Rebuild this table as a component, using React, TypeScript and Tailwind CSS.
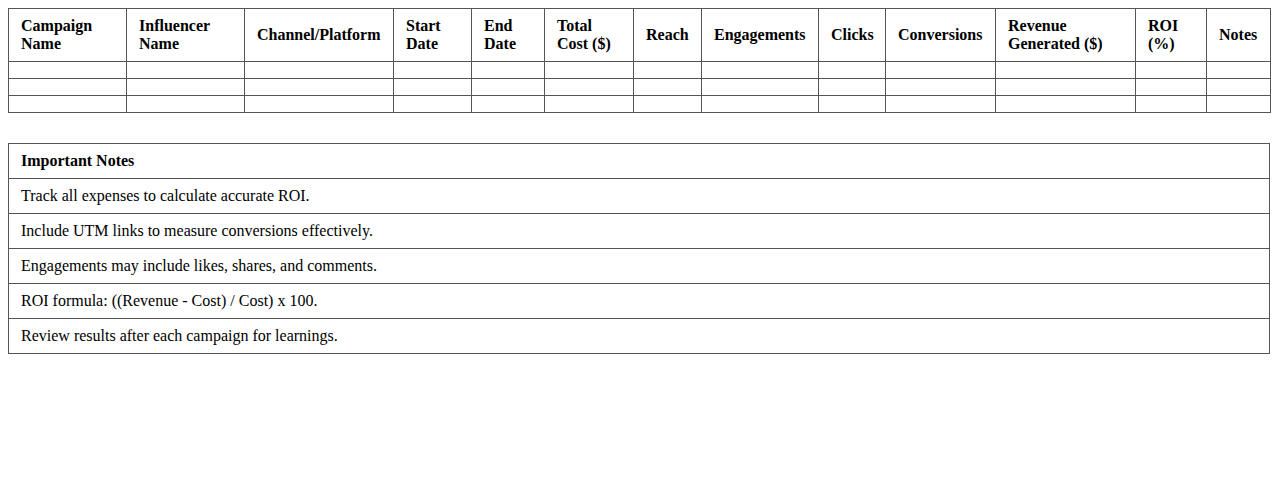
const columns = [
  { label: "Campaign Name", w: "w-[118px]" },
  { label: "Influencer Name", w: "w-[118px]" },
  { label: "Channel/Platform", w: "w-[149px]" },
  { label: "Start Date", w: "w-[78px]" },
  { label: "End Date", w: "w-[73px]" },
  { label: "Total Cost ($)", w: "w-[89px]" },
  { label: "Reach", w: "w-[68px]" },
  { label: "Engagements", w: "w-[117px]" },
  { label: "Clicks", w: "w-[67px]" },
  { label: "Conversions", w: "w-[110px]" },
  { label: "Revenue Generated ($)", w: "w-[140px]" },
  { label: "ROI (%)", w: "w-[71px]" },
  { label: "Notes", w: "w-[64px]" },
];

const notes = [
  "Track all expenses to calculate accurate ROI.",
  "Include UTM links to measure conversions effectively.",
  "Engagements may include likes, shares, and comments.",
  "ROI formula: ((Revenue - Cost) / Cost) x 100.",
  "Review results after each campaign for learnings.",
];

export default function App() {
  return (
    <div className="min-h-[501px] bg-white p-2 text-black text-base leading-[normal] font-['Liberation_Serif','Times_New_Roman',serif]">
      {/* Tracking table */}
      <table className="w-full table-fixed border-collapse">
        <thead>
          <tr>
            {columns.map((c) => (
              <th key={c.label} className={`${c.w} border border-[#555] px-3 py-2 text-left align-middle font-bold`}>
                {c.label}
              </th>
            ))}
          </tr>
        </thead>
        <tbody>
          {[0, 1, 2].map((r) => (
            <tr key={r}>
              {columns.map((c) => (
                <td key={c.label} className="border border-[#555] px-3 py-2"></td>
              ))}
            </tr>
          ))}
        </tbody>
      </table>

      {/* Notes */}
      <table className="mt-[30px] w-full border-collapse">
        <thead>
          <tr>
            <th className="border border-[#555] px-3 py-2 text-left font-bold">Important Notes</th>
          </tr>
        </thead>
        <tbody>
          {notes.map((n) => (
            <tr key={n}>
              <td className="border border-[#555] px-3 py-2">{n}</td>
            </tr>
          ))}
        </tbody>
      </table>
    </div>
  );
}
